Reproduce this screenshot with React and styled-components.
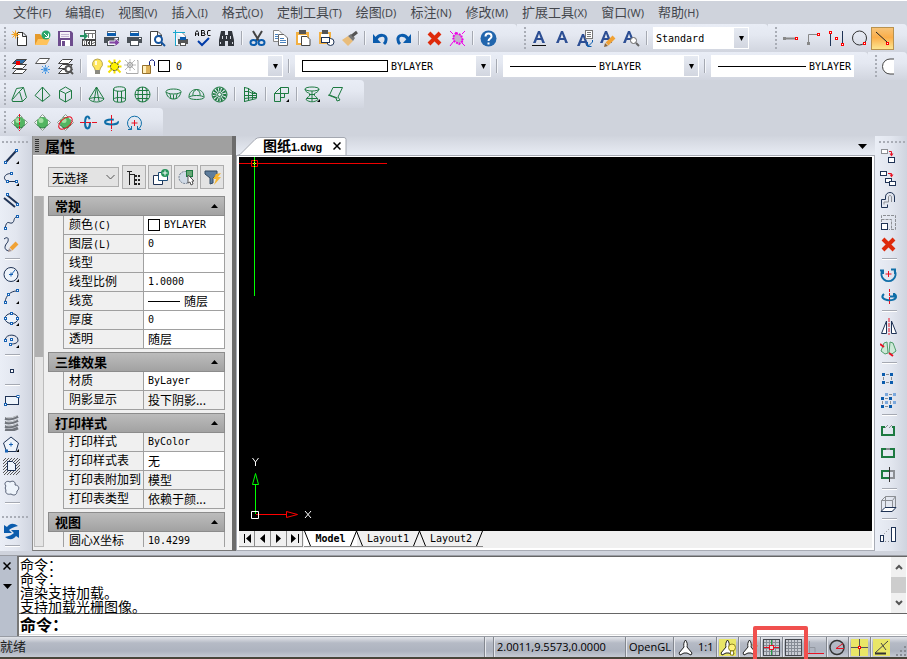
import React from "react";
import styled, { createGlobalStyle, css } from "styled-components";

const navy = "#1f3355";
const blue = "#0b5cad";
const green = "#1d7a41";
const gray = "#8c8f94";
const red = "#e81123";
const cjk = '"Noto Sans CJK SC", sans-serif';
const mono = '"DejaVu Sans Mono", "Noto Sans CJK SC", monospace';

const GlobalStyle = createGlobalStyle`
  * { box-sizing: border-box; }
  body { margin: 0; overflow: hidden; background: #cfd3dc; font-family: ${cjk}; }
  button, select, input { font: inherit; color: inherit; margin: 0; padding: 0; border: 0; background: none; border-radius: 0; outline: 0; }
  select { appearance: none; }
  svg { display: block; flex: none; }
`;

/* ---------- icon drawings, 17 x 17 ---------- */

const Line = ({ d, c = navy, w = 1, f = "none", dash }) => (
  <path d={d} stroke={c} strokeWidth={w} fill={f} strokeDasharray={dash} />
);
const Node = ({ x, y, c = "#1763b5", s = 2 }) => (
  <rect x={x - s / 2} y={y - s / 2} width={s} height={s} fill="#fff" stroke={c} />
);
const Fly = () => <path d="M16 13v3h-3z" fill="#000" />;
const Box = ({ x, y, w, h, c = navy, f = "none", sw = 1 }) => (
  <rect x={x} y={y} width={w} height={h} stroke={c} fill={f} strokeWidth={sw} />
);
const Page = () => (
  <Line d="M1.5 1.5H9l3.500 3.500v10.500h-11zM8.500 1.500v4h4" c="#444" f="#fff" />
);
const LetterA = ({ c = "#2d4f94" }) => (
  <path d="M2 13L7 1h2l5 12h-2.700l-1.100-3H5.800l-1.100 3zM6.500 8h3L8 3.800z" fill={c} fillRule="evenodd" />
);
const Printer = () => (
  <>
    <Box x={4.5} y={1.5} w={8} h={4} c="#6a7078" f="#fff" />
    <path d="M4 3h9v3H4z" fill={blue} />
    <path d="M1 7h15v6H1z" fill="#4b5158" />
    <path d="M13 8h2v1h-2z" fill="#fff" />
    <Box x={4.5} y={10.5} w={8} h={5} c="#4b5158" f="#fff" />
  </>
);
const Orb = () => (
  <>
    <path d="M8.500.5l3 3h-6zM8.500 16.500l3-3h-6zM.5 8.500l3-3v6zM16.500 8.500l-3-3v6z" fill="#eef3f0" stroke="#8c9a90" />
    <circle cx="8.500" cy="8.500" r="5.500" fill="#52b561" />
    <circle cx="7" cy="6.500" r="2.500" fill="#a5e0a4" />
    <path d="M3.500 11c3 4 7 4 10 0" fill="none" stroke="#2f8048" />
  </>
);
const Cross = () => <Line d="M3 3l11 11M14 3L3 14" c="#de2a0b" w={4} />;
const Sheets = ({ top = "#fff" }) => (
  <>
    <Line d="M5.500 11.500h10l-4 4h-10z" c="#444" f="#fff" />
    <Line d="M5.500 6.500h10l-4 4h-10z" c="#444" f="#fff" />
    <Line d="M5.500 1.500h10l-4 4h-10z" c="#444" f={top} />
  </>
);
const Compass = () => (
  <path
    d="M8.500 1C6.500 3.500 6.500 6 7 8L2 14l1 2 4-2h3l4 2 1-2-5-6c.5-2 .5-4.500-1.500-7z"
    fill="#fff"
    stroke="#222"
  />
);
const Burst = ({ x, y, r, c, w = 1 }) => (
  <path
    stroke={c}
    strokeWidth={w}
    d={`M${x - r} ${y}h${2 * r}M${x} ${y - r}v${2 * r}M${x - r + 1} ${y - r + 1}l${2 * r - 2} ${2 * r - 2}M${x + r - 1} ${y - r + 1}l${2 - 2 * r} ${2 * r - 2}`}
  />
);
const GridLines = () => (
  <>
    <rect x="0.500" y="0.500" width="16" height="16" fill="#c9ccd3" stroke="#45484e" />
    <Line d="M3.500 1v15M6.500 1v15M9.500 1v15M12.500 1v15M1 3.500h15M1 6.500h15M1 9.500h15M1 12.500h15" c="#868b94" />
  </>
);

const icons = {
  newFile: (
    <>
      <Line d="M6.500 2.500H12l3.500 3.500v9.500h-9zM11.500 2.500v4h4" c="#333" f="#fff" />
      <Burst x={4.5} y={4.5} r={4} c="#f3a325" />
      <circle cx="4.500" cy="4.500" r="2" fill="#f3a325" />
    </>
  ),
  open: (
    <>
      <path d="M1 4h5l2 2h4v9H1z" fill="#e59a2c" />
      <path d="M1 15l3-6h12l-3 6z" fill="#ffc35c" />
      <circle cx="12" cy="5" r="4.500" fill="#2ba66a" />
      <Line d="M10 3l4 4M14.500 3.500v4H11" c="#fff" />
    </>
  ),
  save: (
    <>
      <path d="M1 1h13l2 2v13H1z" fill="#6d4c8d" />
      <path d="M3 2h10v6H3z" fill="#f5f1f8" />
      <path d="M4 10h9v6H4z" fill="#fff" />
      <path d="M5 11h3v5H5z" fill="#6d4c8d" />
      <Line d="M4 4.500h8M4 6.500h8" c="#c4b5d3" />
    </>
  ),
  acis: (
    <>
      <Box x={4.5} y={0.5} w={11} h={15} c="#555" f="#fff" />
      <Line d="M5 3.500h11M8.500 4v4M12.500 4v4" c="#777" />
      <path d="M2 9h14v7H2z" fill="#444" />
      <path d="M0 5h4V2l4 4-4 4V7H0z" fill="#259162" />
      <Line d="M3.500 15v-4h2v4M3.500 13h2M9 11.500H7.500v3H9M10.500 11v4M15 11.500h-2.500v1.500h2v1.500h-2.500" c="#fff" />
    </>
  ),
  plotTo: (
    <>
      <Printer />
      <path d="M6 11h6V8l5 4.500-5 4.500v-3H6z" fill="#8447a5" stroke="#e6e9f0" />
    </>
  ),
  print: <Printer />,
  preview: (
    <>
      <Page />
      <circle cx="9.500" cy="9.500" r="3.500" fill="#fff" stroke="#16559f" strokeWidth="2" />
      <Line d="M12 12l4 4" c="#16559f" w={2} />
    </>
  ),
  pageSetup: (
    <>
      <Line d="M3.500 2.500H10l3.500 3.500v3M3.500 2.500v13h3" c="#888" f="#fff" />
      <Line d="M1 2.500h12M3.500 0v16" c="#17a7cf" />
      <path d="M6 9h10v5H6z" fill="#555" />
      <path d="M8 7h6v3H8z" fill={blue} />
      <Box x={8.5} y={12.5} w={5} h={3} c="#555" f="#fff" />
    </>
  ),
  spell: (
    <>
      <Line d="M.5 6V2.500L2 .5l1.500 2V6M.5 4h3M6.500 0v6M6.500.5H9l.5 1-.5 1.500H6.500M9 3l1 1v1L9 5.500H6.500M15.500 .5H13L12.500 2v2.500l.5 1h2.500" c="#111" />
      <Line d="M3 11l4 4 7-7" c="#003ca8" w={2} />
    </>
  ),
  find: (
    <>
      <path d="M3 1h4v4h3V1h4l2 9v6h-6v-5H7v5H1v-6z" fill="#30343b" />
      <Line d="M4.500 6v3M12.500 6v3M2.500 12v2M14.500 12v2M8.500 6v3" c="#d5d8e0" />
    </>
  ),
  cut: (
    <>
      <Line d="M4 1l6 10M13 1L7 11" c="#444" w={2} />
      <ellipse cx="4.500" cy="12.500" rx="3" ry="2.500" stroke={blue} strokeWidth="2" fill="none" />
      <ellipse cx="12.500" cy="12.500" rx="3" ry="2.500" stroke={blue} strokeWidth="2" fill="none" />
    </>
  ),
  copy: (
    <>
      <Line d="M1.500 .5H7l3 3v8h-8.500z" c="#888" f="#fff" />
      <Line d="M6.500 4.500H12l3.500 3.500v7.500h-9z" c="#666" f="#fff" />
      <Line d="M3 4.500h3M3 6.500h3M3 8.500h3M8 8.500h4M8 10.500h6M8 12.500h6" c="#4a83bf" />
    </>
  ),
  paste: (
    <>
      <path d="M1 2h13v13H1z" fill="#f2b042" />
      <path d="M4 0h7v4H4z" fill="#555" />
      <path d="M3 5h9v8H3z" fill="#fff" />
      <Line d="M6.500 6.500H12l3 3v6H6.500z" c="#444" f="#fff" />
    </>
  ),
  pasteBlock: (
    <>
      <path d="M1 2h12v12H1z" fill="#f2b042" />
      <path d="M4 0h6v4H4z" fill="#555" />
      <path d="M3 4h8v8H3z" fill="#fff" />
      <circle cx="12.500" cy="12" r="3.500" fill="#fff" stroke={navy} />
      <Box x={3.5} y={7.5} w={8} h={5} c={navy} f="#fff" />
    </>
  ),
  brush: (
    <>
      <path d="M1 10l6-4 5 5-5 5z" fill="#e9bd7b" />
      <path d="M7 6l3-2 4 4-2 3z" fill="#777" />
      <Line d="M11 6l5-4" c="#555" w={3} />
    </>
  ),
  undo: (
    <>
      <Line d="M4 9c3-5 11-5 10 1 0 2-1 3-2 4" c={blue} w={3} />
      <path d="M1 4v9h8z" fill={blue} />
    </>
  ),
  redo: (
    <>
      <Line d="M13 9C10 4 2 4 3 10c0 2 1 3 2 4" c={blue} w={3} />
      <path d="M16 4v9H8z" fill={blue} />
    </>
  ),
  erase: <Cross />,
  purge: (
    <>
      <path d="M7 3l5 2 2 6-4 3-5-3-1-4z" fill="#c4b0cc" stroke="#f000e8" strokeWidth="2" strokeDasharray="2 1" />
      <Line d="M1 1l3 3M16 1l-3 3M1 16l3-4M16 16l-3-3" c="#f000e8" />
    </>
  ),
  help: (
    <>
      <circle cx="8.500" cy="8.500" r="8" fill="#2266ad" />
      <Line d="M5.500 6.500c0-4 6-4 6 0 0 2-3 2-3 4.500" c="#fff" w={2} />
      <path d="M7.500 12.500h2v2h-2z" fill="#fff" />
    </>
  ),
  textUnder: (
    <>
      <LetterA />
      <Line d="M1 15.500h14" c="#111" />
    </>
  ),
  textPlain: <LetterA />,
  textEdit: (
    <>
      <g transform="translate(-2 3)"><LetterA /></g>
      <Box x={8.5} y={0.5} w={7} h={8} c="#777" f="#fff" />
      <Line d="M10 2.500h4M10 4.500h4M10 6.500h4" c="#777" />
      <Line d="M15.500 10v2l-4 4M10.500 12v4.500h4" c={blue} />
    </>
  ),
  textPen: (
    <>
      <g transform="translate(-2 0)"><LetterA /></g>
      <Line d="M7 14l7-7" c="#f0a235" w={4} />
      <path d="M4 17l1-4 3 3z" fill="#8d6535" />
    </>
  ),
  textFind: (
    <>
      <g transform="translate(-2 0)"><LetterA /></g>
      <circle cx="10.500" cy="10.500" r="3" fill="#fff" stroke="#666" />
      <Line d="M13 13l3 3" c="#666" w={2} />
    </>
  ),
  snapEnd: (
    <>
      <Line d="M2 8.500h12" c="#888" w={2} />
      <path d="M1 7h3v3H1z" fill="#888" />
      <Node x={14.5} y={8.5} c="#f00" />
    </>
  ),
  snapFrom: (
    <>
      <Line d="M3.500 14V4.500H13" c="#888" />
      <path d="M2 12h3v3H2z" fill="#888" />
      <Node x={13.5} y={4.5} c="#f00" />
    </>
  ),
  snapMid: (
    <>
      <Line d="M2.500 3v13M14.500 1v15" c={navy} />
      <Node x={2.5} y={2.5} c="#f00" />
      <Node x={8.5} y={8.5} c="#f00" />
      <Node x={14.5} y={14.5} c="#f00" />
    </>
  ),
  snapCen: (
    <>
      <circle cx="8.500" cy="8" r="7" fill="none" stroke="#333" />
      <Node x={13.5} y={13.5} c="#f00" />
    </>
  ),
  snapLine: (
    <>
      <Line d="M2 2l11 10" c="#222" />
      <Node x={13.5} y={13.5} c="#f00" />
    </>
  ),
  layers: (
    <>
      <Sheets top="#2e6da6" />
      <path d="M5 3h4v4H5z" fill="#e00" />
    </>
  ),
  layerFreeze: (
    <>
      <Line d="M5.500.5h10l-4 5h-10z" c="#555" f="#fff" />
      <Burst x={11.5} y={11.5} r={4.500} c="#4c96de" />
      <Box x={9.5} y={9.5} w={4} h={4} c="#8cc0f0" />
    </>
  ),
  layerFind: (
    <>
      <Sheets />
      <circle cx="11.500" cy="11" r="3" fill="#fff" stroke="#555" strokeWidth="2" />
      <Line d="M13 13l3 3" c="#555" w={2} />
    </>
  ),
  bulb: (
    <>
      <path d="M8.500 1a5 5 0 0 1 3 9l-1 3h-4l-1-3a5 5 0 0 1 3-9z" fill="#ffe65c" stroke="#b7a653" />
      <path d="M6 12h5v4H6z" fill="#8b8b82" />
      <path d="M6 3h2v4H6z" fill="#fffbe0" />
    </>
  ),
  sun: (
    <>
      <Burst x={8.5} y={8.5} r={7} c="#f5e100" w={2} />
      <circle cx="8.500" cy="8.500" r="4" fill="#fff200" stroke="#333" strokeDasharray="2 1" />
    </>
  ),
  frozen: (
    <>
      <Burst x={7} y={7} r={6} c="#bbb" />
      <circle cx="7" cy="7" r="2.500" fill="none" stroke="#999" />
      <Line d="M14 2.500h1v13H3.500V14" c="#aaa" />
    </>
  ),
  unlock: (
    <>
      <path d="M2.500 7.500h8v8h-8z" fill="#dfb35c" stroke="#94702c" />
      <path d="M3 8h3v7H3z" fill="#fff0bd" />
      <Line d="M9.500 7V3.500L11 2h2l1.500 1.500V8" c="#1a2784" w={1} />
    </>
  ),
  wedge: <Line d="M5.500 2.500l7-1 3 10-4 4h-10l-.5-2zM12.500 1.500l-4 4-7 8M8.500 5.500l3 10" c={green} />,
  pyramid: <Line d="M8.500 1L16 9.500l-7.500 6L1 9.500zM8.500 1v14" c={green} />,
  cube: <Line d="M2.500 4.500L8.500 1l6 3.500v8l-6 3.500-6-3.500zM2.500 4.500l6 3 6-3M8.500 7.500V16" c={green} />,
  cone: <Line d="M8.500 1L1 13c3 4 12 4 15 0zM8.500 1L6 15M8.500 1L11 15M1 13c3-2 12-2 15 0" c={green} />,
  cylinder: <Line d="M2.500 3c0-3 12-3 12 0v11c0 3-12 3-12 0zM2.500 3c0 3 12 3 12 0M6.500 5v11M10.500 5v11M2.500 13c2-2 10-2 12 0" c={green} />,
  sphere: (
    <>
      <circle cx="8.500" cy="8.500" r="7.500" fill="none" stroke={green} />
      <Line d="M8.500 1v15M1 8.500h15M2.500 4.500h12M2.500 12.500h12M5.500 1.500c-2 4-2 10 0 14M11.500 1.500c2 4 2 10 0 14" c={green} />
    </>
  ),
  dish: (
    <>
      <ellipse cx="8.500" cy="5.500" rx="7.500" ry="2.500" fill="none" stroke={green} />
      <Line d="M1 6c1 4 3 7 7.500 7S15 10 16 6M5 8l1 5M8.500 8.500v4.500M12 8l-1 5" c={green} />
    </>
  ),
  dome: (
    <>
      <ellipse cx="8.500" cy="11.500" rx="7.500" ry="2" fill="none" stroke={green} />
      <Line d="M1 11c0-10 15-10 15 0M8.500 3.500c-3 1-4 4-3.500 6M8.500 3.500c3 1 4 4 3.500 6" c={green} />
    </>
  ),
  torus: (
    <>
      <circle cx="8.500" cy="8.500" r="7.500" fill="none" stroke={green} />
      <circle cx="8.500" cy="8.500" r="5" fill="none" stroke={green} strokeWidth="4" strokeDasharray="1.500 1" />
      <circle cx="8.500" cy="8.500" r="2" fill="#e6e9f0" stroke={green} />
    </>
  ),
  mesh: <Line d="M2.500 1v15M6.500 2v13M10.500 5v9M14.500 7v5M2.500 1.500l4 1 4 3 4 2M2.500 5.500h4l4 2h4M2.500 9.500h12M2.500 12.500l8-1h4M2.500 15.500l4-1 8-2" c={green} />,
  extrude: (
    <>
      <Line d="M7.500 1.500h8v6h-8zM1.500 7.500h6v8h-6zM1.500 7.500l6-6M7.500 11.500h4v-4" c={green} />
      <Fly />
    </>
  ),
  revolve: (
    <>
      <ellipse cx="8" cy="3" rx="7" ry="2" fill="none" stroke={green} />
      <Line d="M1 3c1 5 5 3 5 5.500s-3 2-4 5c3 3 9 3 12 0-1-3-4-3-4-5s4-1 5-5.500M8 5v10M5 8.500h6M3 12.500h10" c={green} />
      <Fly />
    </>
  ),
  ruled: <Line d="M6 1.500h9.500L11 11l2 3-3 1-1-3M6 1.500L2.500 9l8 3M1 9l8 3" c={green} />,
  orbV: (<><Orb /><Line d="M8.500 0v17" c={red} dash="3 1" /></>),
  orb: <Orb />,
  orbR: (
    <>
      <Orb />
      <ellipse cx="8.500" cy="9" rx="8" ry="4.500" transform="rotate(-40 8.500 9)" fill="none" stroke={red} />
    </>
  ),
  rotX: (<><ellipse cx="7.500" cy="8.500" rx="2.500" ry="6" fill="none" stroke="#0f6ea8" strokeWidth="2" strokeDasharray="24 4" /><Line d="M0 8.500h17" c={red} dash="5 1" /></>),
  rotY: (<><ellipse cx="8.500" cy="8" rx="6.500" ry="2.500" fill="none" stroke="#0f6ea8" strokeWidth="2" strokeDasharray="24 4" /><Line d="M8.500 1v16" c={red} dash="4 1" /></>),
  rotZ: (<><Line d="M5.500 15.500A7 7 0 1 1 11.500 15.500M2 15.500h3.500V12M15 15.500h-3.500V12" c="#0f6ea8" /><Line d="M8.500 6v6M5.500 9h6" c={red} /></>),

  line: (<><Line d="M3 14L13 3" w={2} /><Node x={2.5} y={14.5} /><Node x={13.5} y={2.5} /><Fly /></>),
  polyline: (<><Line d="M8 3.500c-7 0-9 6-3 8h8" /><Node x={8.5} y={3.500} /><Node x={4.5} y={11.5} /><Node x={13.5} y={11.5} /><Fly /></>),
  mline: (<><Line d="M4 3l11 9M1 6l11 9" w={2} /><Node x={4.5} y={2.500} /><Node x={14.5} y={12.5} /></>),
  spline: (<><Line d="M2 14c2-9 4-4 7-5s1-6 5-6" /><Node x={2.5} y={14.5} /><Node x={14.5} y={2.500} /></>),
  sketch: (<><Line d="M1 3c5-4 5 2 3 4s-4 7 2 8" /><Line d="M8 13l6-6" c="#f0a235" w={4} /><path d="M5 16l1-4 3 3z" fill="#a99" /></>),
  circle: (<><circle cx="8" cy="8.500" r="7" fill="#eef4fb" stroke={navy} /><Line d="M8 9l4-5M6 8.500h4M8 6.500v4" c="#1763b5" /><Fly /></>),
  arc: (<><Line d="M2 14C3 7 8 3 14 3" /><Node x={2.5} y={14.5} /><Node x={5.5} y={6.5} /><Node x={14.5} y={2.500} /><Fly /></>),
  ellipse: (<><ellipse cx="8.500" cy="8.500" rx="6.500" ry="5" fill="#eef4fb" stroke={navy} /><Node x={8.5} y={3.500} /><Node x={2.5} y={8.500} /><Node x={14.5} y={8.500} /><Node x={8.5} y={13.5} /><Fly /></>),
  earc: (<><Line d="M2 8C3 1 15 2 15 8c0 3-3 4-7 4" /><Node x={2.5} y={8.500} /><Node x={8.5} y={7.500} /><Node x={7.5} y={12.5} /><Fly /></>),
  point: <Box x={7.5} y={7.5} w={3} h={3} f="#fff" />,
  rect: (<><Box x={2.5} y={4.5} w={13} h={8} f="#eef4fb" /><Node x={2.5} y={12.5} /><Node x={15} y={4.5} /></>),
  helix: (
    <>
      <Line d="M2 4.500c4 1 9 0 13-2M2 8.500c4 1 9 0 13-2M2 12.500c4 1 9 0 13-2M2 16c4 1 9 0 13-2" c="#70747b" w={3} />
      <Line d="M3 3.500c4 1 8 0 11-2M3 7.500c4 1 8 0 11-2M3 11.500c4 1 8 0 11-2" c="#cfd2d7" />
    </>
  ),
  polygon: (<><path d="M8 1l7.500 6-2.500 8.500H3.500L.5 7z" fill="#eef4fb" stroke={navy} /><Line d="M6 8.500h4M8 6.500v4" c="#1763b5" /><Node x={3.5} y={15} /><Fly /></>),
  hatch: (<><Line d="M0 3l3-3M0 6l6-6M0 9l9-9M0 12L12 0M0 15L15 0M1 17L17 1M4 17L17 4M7 17L17 7M10 17l7-7M13 17l4-4" c="#555" /><Line d="M4.500 3.500h5l3 3v6h-8z" f="#eef4fb" /></>),
  cloud: <path d="M3 6c-3-3 1-6 4-4 3-2 6 0 5 3 4 0 5 4 2 6 0 4-3 5-6 3-4 1-6-1-5-4-1-1-1-3 0-4z" fill="#eef4fb" stroke="#555f74" />,
  refresh: (
    <>
      <path d="M1 2v8h8L6 7c2-2 5-3 9-4C10-1 6 1 4 4z" fill={blue} />
      <path d="M16 15V7H8l3 3c-2 2-5 3-9 4 5 4 9 2 11-1z" fill={blue} />
    </>
  ),

  copyObj: (<><Box x={1.500} y={1.500} w={6} h={4} c={gray} f="#fff" /><Box x={8.500} y={9.500} w={6} h={5} f="#fff" /><Line d="M9 3.500h2.500V6" c={red} /><path d="M9.500 5.500h4l-2 3z" fill={red} /></>),
  copyMulti: (<><Box x={0.5} y={1.500} w={6} h={4} f="#fff" /><Box x={5.500} y={8.500} w={6} h={4} f="#fff" /><Box x={9.500} y={11.500} w={6} h={4} f="#fff" /><Line d="M8 3.500h3.500V5" c={red} /><path d="M9.500 4.500h4l-2 3z" fill={red} /></>),
  offset: (<><Line d="M1.500 15.500v-8h4V5c0-6 9-6 9 0v5M1.500 15.500h6v-3" /><Line d="M4 12.500V10h4.500V5c0-2 3-2 3 0v5" c={gray} /></>),
  scale: (<><Line d="M1.500 8V1.500h14v14H9M1.500 5.500h10v10" c={gray} dash="3 1" /><Box x={1.500} y={9.500} w={6} h={6} f="#fff" /></>),
  rotate: (<><Line d="M2.500 4.500A7 7 0 1 0 14.500 4.500M0 4.500h3V8M11 3.500h4V8" c="#0f6ea8" w={2} /><Line d="M8.500 5v6M5.500 8h6" c={red} /></>),
  rotate3: (<><Line d="M4 6c-7 6 11 9 12 3 0-2-1-3-3-3M10 8.500h4V5" c="#0f6ea8" w={2} /><Line d="M9.500 1v16" c={red} dash="3 1" /></>),
  mirror: (<><Line d="M6.500 3v12.500h-5zM11.500 3v12.500h5z" f="#fff" /><Line d="M9 0v17" c={red} dash="4 1" /></>),
  mirror3: (<><Line d="M4 3l3-1 1 11-3 1-4-3zM13 3l-3-1-1 11 3 1 4-3z" c="#4f9c6b" f="#cde9d7" /><Line d="M0 4l4 3M9 13l4 3" c={red} w={2} /></>),
  array: (<><path d="M2 3h3v3H2zM10 3h3v3h-3zM2 11h3v3H2zM10 11h3v3h-3z" fill={blue} /><Line d="M6 4.500h3M6 12.500h3M3.500 7v3M11.500 7v3" c={gray} /></>),
  array3: (<><path d="M5 1h3v3H5zM13 1h3v3h-3zM13 9h3v3h-3zM5 9h3v3H5z" fill="#7ba8dc" /><path d="M1 5h3v3H1zM9 5h3v3H9zM1 13h3v3H1zM9 13h3v3H9z" fill={blue} /><Line d="M9 2.500h3M5 6.500h3M2.500 9v3M10.500 9v3M5 14.500h3" c={gray} /></>),
  breakAt: (<><Line d="M5 5H2v8h12V5h-2" c={green} w={2} /><Line d="M5 6l3-3M9 6l3-3" c={gray} /></>),
  breakOne: (<><Box x={2} y={5} w={12} h={8} c={green} sw={2} /><Line d="M6 5h4" c={gray} w={2} /></>),
  trim: (<><Line d="M9 5H2v7h7" c={green} w={2} /><Line d="M10 5h4v7h-4" c={gray} w={2} /><Line d="M9.500 1v15" c="#333" /></>),
  box3: (<><Line d="M1.500 4.500h11v11h-11zM1.500 4.500l4-4h10l-3 4M15.500.5v11l-3 4M5.500.5v11h10" c={gray} /><Line d="M1 15.500h11l4-4H5z" f="#fff" /></>),
  ucs: (<><Box x={0.5} y={9.500} w={3} h={6} f="#fff" /><Box x={11.500} y={1.500} w={4} h={14} f="#fff" /><Line d="M4 8l6-6M5 15.500h6" c={gray} dash="1 2" /></>),

  tree: (<><Line d="M1 2.500h5M3.500 2v14M3.500 5.500H8M8.500 5v10" c="#222" /><Line d="M8 7h3M12 7h2M8 11h3M12 11h2M8 15h3M12 15h2" c="#222" w={2} /></>),
  selectAdd: (<><Line d="M1.500 6.500h9v9h-9z" f="#fff" /><Line d="M6.500 3.500h9v8h-9z" f="#fff" c="#1c4c77" /><circle cx="13" cy="4" r="4" fill="#25945a" /><Line d="M10.500 4h5M13 1.500v5" c="#fff" /></>),
  quickSel: (<><circle cx="7" cy="8.500" r="6" fill="#d0dae6" stroke="#6e7c8e" strokeDasharray="2 1" /><Box x={8.5} y={1.5} w={6} h={6} c={green} f="#67a876" /><path d="M10 6v8l2-1 1 3 2-1-1-3h2z" fill="#fff" stroke="#555" /></>),
  filter: (<><path d="M1 2h12v3L9 9v5l-3 1V9L1 5z" fill="#5e7d9c" stroke="#334a62" /><path d="M12 5l5-1-3 4h3l-7 8 2-6H9z" fill="#f7b62f" /></>),

  scaleA: <Compass />,
  scaleB: (<><path d="M0 0h17v17H0z" fill="#e9e667" /><Compass /><circle cx="13" cy="8.500" r="3.500" fill="#fff27a" stroke="#8e8421" /><path d="M11.500 12h3v4h-3z" fill="#fff" stroke="#8e8421" /></>),
  scaleC: (<><Compass /><Line d="M12 5l4 3" c="#b4854b" w={3} /></>),
  snapGrid: (<><GridLines /><Line d="M8.500 1v5M8.500 11v5" c="#26a045" /><Line d="M1 8.500h5M11 8.500h5" c={red} /><Box x={6.5} y={6.5} w={4} h={4} c={red} f="#ddd" /></>),
  grid: <GridLines />,
  ortho: (<><Line d="M2.500 2v12" c="#9297a0" /><Line d="M3 8.500h5v5" c="#9297a0" /><Line d="M1 14.500h16" c={red} /></>),
  polar: (<><circle cx="8" cy="8.500" r="7" fill="none" stroke="#333" strokeWidth="1.500" /><Line d="M7 9.500h8M7 9.500l7-5" c={red} /></>),
  osnap: (<><path d="M0 0h17v17H0z" fill="#e9e667" /><Line d="M0 8.500h17M8.500 0v17" c="#555" /><Node x={8.5} y={8.5} c="#f00" /></>),
  otrack: (<><path d="M0 0h17v17H0z" fill="#e9e667" /><Line d="M2 14L15 2M8 4l5 7" c="#444" /><Line d="M2 14.500h11" c="#333" w={2} /></>),
};

const Svg = styled.svg`
  width: 17px;
  height: 17px;
`;
const Icon = ({ name }) => (
  <Svg viewBox="0 0 17 17" aria-hidden="true">{icons[name]}</Svg>
);

/* ---------- shell ---------- */

const Shell = styled.div`
  height: 100vh;
  display: flex;
  flex-direction: column;
  overflow: hidden;
  color: #000;
  font-size: 12px;
`;
const MenuBar = styled.nav`
  flex: none;
  height: 24px;
  padding-left: 13px;
  display: flex;
  gap: 14px;
  border-top: 1px solid #fff;
  background: #cfd3dc;
`;
const MenuItem = styled.button`
  font-size: 13px;
  line-height: 21px;
  height: 22px;
  color: #44474d;
  white-space: nowrap;
  small { font-family: "Noto Sans", sans-serif; font-size: 11px; }
`;

const ToolRow = styled.div`
  flex: none;
  display: flex;
  height: 28px;
`;
const ToolGroup = styled.div`
  display: flex;
  align-items: center;
  flex: ${(p) => (p.$grow ? "1 1 0" : "none")};
  padding: 0 ${(p) => p.$end || 0}px 0 ${(p) => p.$start || 0}px;
  border-radius: 0 4px 0 0;
  background: linear-gradient(#e9edf6, #e4e8f1 40%, #d1d5df);
  overflow: hidden;
`;
const Grip = styled.span`
  flex: none;
  ${(p) =>
    p.$flat
      ? css`width: 27px; height: 2px; margin: 5px 0 2px 2px; background: repeating-linear-gradient(90deg, #a9adb6 0 2px, transparent 2px 4px);`
      : css`width: 2px; height: 22px; margin: 0 2px 0 4px; background: repeating-linear-gradient(#a9adb6 0 2px, transparent 2px 4px);`}
`;
const ToolButton = styled.button`
  flex: none;
  width: 23px;
  height: ${(p) => (p.$tall ? 22 : 23)}px;
  padding: ${(p) => (p.$tall ? "3px 3px 2px" : "2px")};
  border: ${(p) => (p.$tall ? 0 : 1)}px solid ${(p) => (p.$active ? "#b9924e" : "transparent")};
  background: ${(p) => (p.$active ? "linear-gradient(#f7c377, #fbae4a 45%, #fde58f)" : "none")};
`;
const Divider = styled.span`
  flex: none;
  ${(p) =>
    p.$flat
      ? css`width: 15px; height: 2px; margin: 3px 0 3px 5px; background: linear-gradient(#a5a9b2 50%, #fff 50%);`
      : css`width: 2px; height: 14px; margin: 0 3px; background: linear-gradient(90deg, #a5a9b2 50%, #f4f6fa 50%);`}
`;

const Field = styled.div`
  flex: none;
  width: ${(p) => p.$width}px;
  height: 22px;
  margin-left: ${(p) => p.$gap || 0}px;
  padding-left: ${(p) => p.$pad || 3}px;
  display: flex;
  align-items: center;
  gap: 3px;
  background: #fff;
  font-family: ${mono};
  font-size: 10px;
`;
const FieldSelect = styled.select`
  flex: 1;
  min-width: 0;
  height: 20px;
  color: #000;
`;
const ArrowBox = styled.span`
  flex: none;
  width: 14px;
  height: 20px;
  margin-right: 1px;
  display: grid;
  place-items: center;
  background: linear-gradient(#e6eaf2, #d2d6e0);
`;
const ColorSwatch = styled.span`
  flex: none;
  width: ${(p) => p.$w}px;
  height: ${(p) => p.$h}px;
  border: 1px solid #000;
`;
const Rule = styled.span`
  flex: none;
  width: ${(p) => p.$w}px;
  height: 1px;
  background: #000;
`;
const LayerMarks = styled.span`
  flex: none;
  display: flex;
  align-items: center;
  gap: 3px;
  margin-right: 3px;
`;
const LayerMark = styled.span`
  width: 14px;
  display: flex;
  justify-content: center;
`;
const Spacer = styled.span`
  width: 2px;
`;

const DownArrow = ({ w = 5 }) => (
  <svg width={w} height="5" viewBox={`0 0 ${w} 5`} aria-hidden="true">
    <path d={`M0 0h${w}L${w / 2} 5z`} />
  </svg>
);

const Tools = ({ items, tall, active }) =>
  items.map((it, i) =>
    it === "|" ? (
      <Divider key={i} $flat={tall} />
    ) : (
      <ToolButton key={i} type="button" $tall={tall} $active={it === active} aria-label={it}>
        <Icon name={it} />
      </ToolButton>
    )
  );

const Combo = ({ label, value, width, gap, pad, lead, noArrow }) => (
  <Field $width={width} $gap={gap} $pad={pad}>
    {lead}
    <FieldSelect aria-label={label} defaultValue={value}>
      <option>{value}</option>
    </FieldSelect>
    {!noArrow && <ArrowBox><DownArrow /></ArrowBox>}
  </Field>
);

/* ---------- work area ---------- */

const Work = styled.main`
  flex: 1;
  min-height: 0;
  display: flex;
  padding-bottom: 4px;
  background: #cfd3dc;
`;
const SideBar = styled.div`
  flex: none;
  width: 32px;
  display: flex;
  flex-direction: column;
  overflow: hidden;
  padding-left: ${(p) => p.$inset || 0}px;
  background: linear-gradient(90deg, #eaeef6, #e2e6ef 50%, #cfd4df);
`;
const SideGap = styled.span`
  flex: none;
  height: 4px;
`;

const Panel = styled.section`
  flex: none;
  width: 204px;
  display: flex;
  flex-direction: column;
  background: #f0f0f0;
  border-right: 4px solid #6c6c6c;
  border-left: 1px solid #8f8f8f;
  border-bottom: 1px solid #777;
`;
const PanelTitle = styled.h2`
  flex: none;
  display: flex;
  align-items: center;
  gap: 6px;
  height: 20px;
  margin: 0;
  padding-left: 2px;
  background: #a0a0a0;
  border-bottom: 1px solid #fff;
  font-size: 15px;
  font-weight: 700;
`;
const PanelGrip = styled.span`
  width: 4px;
  height: 14px;
  background: repeating-linear-gradient(#333 0 1px, transparent 1px 2px);
`;
const PanelTools = styled.div`
  flex: none;
  display: flex;
  align-items: center;
  gap: 2px;
  padding: 9px 0 7px 15px;
`;
const SelectionBox = styled.div`
  width: 71px;
  height: 20px;
  margin-right: 1px;
  padding-left: 3px;
  display: flex;
  align-items: center;
  background: #e3e3e3;
  border: 1px solid #adadad;
  select { flex: 1; min-width: 0; }
  svg { margin-right: 3px; }
`;
const PanelButton = styled.button`
  width: 24px;
  height: 24px;
  padding: 2px;
  display: grid;
  place-items: center;
  background: #e3e3e3;
  border: 1px solid #adadad;
`;
const PanelBody = styled.div`
  flex: 1;
  min-height: 0;
  display: flex;
  gap: 4px;
  margin-bottom: 3px;
  overflow: hidden;
`;
const ScrollTrack = styled.div`
  flex: none;
  width: 10px;
  margin-left: 1px;
  background: #e5e5e5;
  border: 1px solid #bcbcbc;
  border-top: 0;
`;
const ScrollThumb = styled.div`
  height: 46%;
  background: #b0b0b0;
`;
const Groups = styled.div`
  flex: 1;
  display: flex;
  flex-direction: column;
  gap: 3px;
  margin-right: 7px;
`;
const GroupTitle = styled.button`
  width: 100%;
  height: 20px;
  padding: 0 6px;
  display: flex;
  align-items: center;
  justify-content: space-between;
  border: 1px solid #8c8c8c;
  background: linear-gradient(#bcbcbc, #a2a2a2);
  font-size: 13px;
  font-weight: 700;
  line-height: 18px;
`;
const PropTable = styled.table`
  width: calc(100% - 15px);
  margin-left: 15px;
  border-collapse: separate;
  border-spacing: 0;
  table-layout: fixed;
  border-left: 1px solid #a0a0a0;
`;
const PropLabel = styled.th`
  width: 80px;
  height: 19px;
  padding: 0 0 2px 5px;
  border-right: 1px solid #a0a0a0;
  border-bottom: 1px solid #a0a0a0;
  font-size: 12px;
  font-weight: 400;
  line-height: 16px;
  text-align: left;
  white-space: nowrap;
  b { font-family: ${mono}; font-size: 10px; font-weight: 400; line-height: 0; }
`;
const PropCell = styled.td`
  height: 19px;
  padding: 0 0 0 4px;
  border-right: 1px solid #a0a0a0;
  border-bottom: 1px solid #a0a0a0;
  background: ${(p) => (p.$editable ? "#fff" : "#f0f0f0")};
`;
const PropValue = styled.div`
  display: flex;
  align-items: center;
  gap: 4px;
  height: 18px;
`;
const PropInput = styled.input`
  flex: 1;
  min-width: 0;
  width: 100%;
  height: 18px;
  padding-bottom: 1px;
  font-family: ${(p) => (p.$latin ? mono : cjk)};
  font-size: ${(p) => (p.$latin ? 10 : 12)}px;
`;

const groups = [
  ["常规", [
    ["颜色", "BYLAYER", 1, <ColorSwatch $w={12} $h={12} />, "(C)"],
    ["图层", "0", 1, null, "(L)"],
    ["线型", "", 1],
    ["线型比例", "1.0000", 1],
    ["线宽", "随层", 1, <Rule $w={32} />],
    ["厚度", "0", 1],
    ["透明", "随层", 1],
  ]],
  ["三维效果", [["材质", "ByLayer", 1], ["阴影显示", "投下阴影...", 0]]],
  ["打印样式", [
    ["打印样式", "ByColor", 0],
    ["打印样式表", "无", 1],
    ["打印表附加到", "模型", 0],
    ["打印表类型", "依赖于颜...", 0],
  ]],
  ["视图", [["圆心X坐标", "10.4299", 0]]],
];

const Properties = () => (
  <Panel>
    <PanelTitle><PanelGrip />属性</PanelTitle>
    <PanelTools>
      <SelectionBox>
        <select aria-label="选择"><option>无选择</option></select>
        <svg width="9" height="6" viewBox="0 0 9 6"><path d="M.5 1l4 4 4-4" fill="none" stroke="#555" /></svg>
      </SelectionBox>
      {["tree", "selectAdd", "quickSel", "filter"].map((n) => (
        <PanelButton key={n} type="button" aria-label={n}><Icon name={n} /></PanelButton>
      ))}
    </PanelTools>
    <PanelBody>
      <ScrollTrack><ScrollThumb /></ScrollTrack>
      <Groups>
        {groups.map(([title, rows]) => (
          <div key={title}>
            <GroupTitle type="button">
              {title}
              <svg width="7" height="4" viewBox="0 0 7 4"><path d="M0 4h7L3.500 0z" /></svg>
            </GroupTitle>
            <PropTable>
              <tbody>
                {rows.map(([label, value, editable, lead, key]) => (
                  <tr key={label}>
                    <PropLabel scope="row">{label}{key && <b>{key}</b>}</PropLabel>
                    <PropCell $editable={editable}>
                      <PropValue>
                        {lead}
                        <PropInput
                          aria-label={label}
                          defaultValue={value}
                          readOnly={!editable}
                          $latin={/^[\x00-\x7f]*$/.test(value)}
                        />
                      </PropValue>
                    </PropCell>
                  </tr>
                ))}
              </tbody>
            </PropTable>
          </div>
        ))}
      </Groups>
    </PanelBody>
  </Panel>
);

const Document = styled.section`
  flex: 1;
  min-width: 0;
  display: flex;
  flex-direction: column;
  border-bottom: 1px solid #a8acb5;
`;
const TabStrip = styled.div`
  flex: none;
  height: 19px;
  padding-right: 8px;
  display: flex;
  align-items: flex-end;
  justify-content: space-between;
  background: linear-gradient(#d0d4dd, #e8ecf4);
`;
const FileTab = styled.button`
  position: relative;
  height: 18px;
  width: 111px;
  padding: 0 6px 0 27px;
  display: flex;
  align-items: center;
  justify-content: space-between;
  font-size: 14px;
  font-weight: 700;
  line-height: 16px;
  white-space: nowrap;
  b { font-family: "Liberation Sans", sans-serif; font-size: 11px; }
  & > span, & > svg { position: relative; }
`;
const TabShape = styled.svg`
  && { position: absolute; inset: 0; width: 111px; height: 18px; }
`;
const ListButton = styled.button`
  width: 9px;
  height: 18px;
  display: grid;
  place-items: center;
`;
const Frame = styled.div`
  flex: 1;
  min-height: 0;
  display: flex;
  flex-direction: column;
  padding: 1px 2px;
  border: 1px solid #a8acb5;
  border-bottom: 0;
  background: #fff;
`;
const Canvas = styled.div`
  flex: 1;
  min-height: 0;
  display: flex;
  flex-direction: column;
  justify-content: space-between;
  background: #000;
  overflow: hidden;
`;
const SheetBar = styled.div`
  flex: none;
  height: 18px;
  display: flex;
  align-items: flex-start;
  background: #f0f0f0;
  border-bottom: 1px solid #fff;
`;
const NavButton = styled.button`
  width: 16px;
  height: 16px;
  padding-left: 2px;
  background: #f0f0f0;
  border-right: 1px solid #8c8c8c;
  border-bottom: 1px solid #8c8c8c;
`;
const SheetTab = styled.button`
  flex: none;
  width: ${(p) => p.$width}px;
  height: 16px;
  margin-left: ${(p) => (p.$on ? 1 : -1)}px;
  display: flex;
  align-items: center;
  justify-content: space-between;
  background: ${(p) => (p.$on ? "#fff" : "none")};
  font-family: ${mono};
  font-size: 10px;
  font-weight: ${(p) => (p.$on ? 700 : 400)};
  border-bottom: 1px solid #888;
`;
const Slash = ({ back }) => (
  <svg width="8" height="15" viewBox="0 0 8 15"><path d={back ? "M.5 0l6 15" : "M7.500 0l-6 15"} stroke="#000" /></svg>
);

const Drawing = () => (
  <Document>
    <TabStrip>
      <FileTab type="button">
        <TabShape viewBox="0 0 111 18"><path d="M1 18.500L4 17.500 19 2.500q2-2 5-2h84q2 0 2 2v16" fill="#fff" stroke="#a4a8b1" /></TabShape>
        <span>图纸<b>1.dwg</b></span>
        <svg width="8" height="8" viewBox="0 0 8 8"><path d="M.5.5l7 7M7.500.5l-7 7" stroke="#000" strokeWidth="1.500" /></svg>
      </FileTab>
      <ListButton type="button" aria-label="文档列表"><DownArrow w={9} /></ListButton>
    </TabStrip>
    <Frame>
      <Canvas>
        <svg width="150" height="140" viewBox="0 0 150 140" fill="none">
          <path d="M0 6.500h148" stroke="#f00000" />
          <path d="M15.500 0v139" stroke="#0f0" />
          <path d="M12.500 3.500h6v6h-6z" stroke="#f00000" />
          <path d="M15.500 3v7M14 6.500h3" stroke="#ff0" strokeDasharray="1 1" />
        </svg>
        <svg width="90" height="80" viewBox="0 0 90 80" fill="none">
          <path d="M13.500 7l3 4 3-4M16.500 11v4M66 60l6 7M72 60l-6 7" stroke="#fff" />
          <path d="M16.500 63V33.500M13.500 33.500h6l-3-11z" stroke="#0f0" />
          <path d="M17 63.500h30M47.500 60.500v6l11-3z" stroke="red" />
          <path d="M12.500 60.500h7v7h-7z" stroke="#fff" />
        </svg>
      </Canvas>
      <SheetBar>
        {["M3 3v8M10 2v9L5 6.500z", "M8 2v9L3 6.500z", "M3 2v9l5-4.500z", "M2 2v9l5-4.500zM9 3v8"].map((d, i) => (
          <NavButton key={i} type="button" aria-label={["首个", "上一个", "下一个", "最后"][i]}>
            <svg width="12" height="13" viewBox="0 0 12 13"><path d={d} /><path d={i === 0 ? "M3.500 2v9" : i === 3 ? "M9.500 2v9" : "M0 0"} stroke="#000" /></svg>
          </NavButton>
        ))}
        <SheetTab type="button" $on $width={53}><Slash back />Model<Slash /></SheetTab>
        <SheetTab type="button" $width={64}><Slash back />Layout1<Slash /></SheetTab>
        <SheetTab type="button" $width={64}><Slash back />Layout2<Slash /></SheetTab>
      </SheetBar>
    </Frame>
  </Document>
);

/* ---------- command line and status ---------- */

const Command = styled.section`
  flex: none;
  display: flex;
  height: 81px;
  border-top: 1px solid #9a9da4;
  background: #b9c0cd;
`;
const CommandSide = styled.div`
  flex: none;
  width: 17px;
  display: flex;
  flex-direction: column;
  gap: 12px;
  padding: 6px 0 0 3px;
`;
const SideButton = styled.button`
  width: 9px;
  height: 8px;
`;
const CommandMain = styled.div`
  flex: 1;
  min-width: 0;
  background: #fff;
  border-top: 1px solid #666;
  border-left: 2px solid #777;
`;
const History = styled.div`
  display: flex;
  height: 57px;
  border-bottom: 1px solid #666;
`;
const Log = styled.pre`
  flex: 1;
  margin: 0;
  padding: 0 0 0 1px;
  font-family: ${cjk};
  font-size: 14px;
  line-height: 14px;
`;
const LogScroll = styled.div`
  width: 15px;
  margin-right: 1px;
  display: flex;
  flex-direction: column;
  background: #f0f0f0;
  button { height: 22px; display: grid; place-items: center; }
`;
const LogThumb = styled.div`
  height: 17px;
  background: #cdcdcd;
`;
const Prompt = styled.label`
  display: flex;
  height: 21px;
  padding-left: 1px;
  border-bottom: 1px solid #ddd;
  font-size: 16px;
  font-weight: 700;
  line-height: 20px;
  input { flex: 1; font-weight: 400; }
`;
const Status = styled.footer`
  flex: none;
  display: flex;
  align-items: stretch;
  height: 23px;
  border-top: 1px solid #989ca4;
  border-bottom: 2px solid #49453a;
  background: linear-gradient(#e3e5ea, #b5bac5 30%, #adb3bf 70%, #c5cad3);
  font-family: "Open Sans", ${cjk};
  font-size: 11px;
  line-height: 18px;
`;
const Ready = styled.div`
  flex: 1;
  font-family: ${cjk};
  font-size: 13px;
  color: #222;
`;
const Cell = styled.div`
  flex: none;
  width: ${(p) => p.$width}px;
  padding-left: 3px;
  border-left: 1px solid #83878f;
  box-shadow: inset 1px 0 #e6e8ed;
  display: flex;
  align-items: center;
  gap: 4px;
`;
const StatusToggle = styled.button`
  flex: none;
  width: 22px;
  padding-left: 2px;
  border-left: 1px solid #83878f;
  box-shadow: inset 1px 0 #e6e8ed;
`;
const Marked = styled.div`
  position: relative;
  display: flex;
`;
const Marker = styled.span`
  position: absolute;
  inset: -11px -4px -8px -7px;
  border: 4px solid #f0504e;
  border-radius: 2px;
  pointer-events: none;
  z-index: 1;
`;
const Corner = styled.div`
  width: 15px;
  display: flex;
  align-items: flex-end;
  justify-content: flex-end;
`;

const menus = [
  ["文件", "F"], ["编辑", "E"], ["视图", "V"], ["插入", "I"], ["格式", "O"], ["定制工具", "T"],
  ["绘图", "D"], ["标注", "N"], ["修改", "M"], ["扩展工具", "X"], ["窗口", "W"], ["帮助", "H"],
];
const Toggle = ({ name }) => (
  <StatusToggle type="button" aria-label={name}><Icon name={name} /></StatusToggle>
);

export default function App() {
  return (
    <Shell>
      <GlobalStyle />
      <MenuBar>
        {menus.map(([t, k]) => (
          <MenuItem key={t} type="button">{t}<small>({k})</small></MenuItem>
        ))}
      </MenuBar>

      <ToolRow>
        <ToolGroup $end={17}>
          <Grip />
          <Tools items={["newFile", "open", "save", "acis", "plotTo", "print", "preview", "pageSetup", "spell", "find", "|", "cut", "copy", "paste", "pasteBlock", "brush", "|", "undo", "redo", "|", "erase", "purge", "|", "help"]} />
        </ToolGroup>
        <ToolGroup $start={3} $end={19}>
          <Grip />
          <Tools items={["textUnder", "textPlain", "textEdit", "textPen", "textFind", "|"]} />
          <Combo label="文字样式" value="Standard" width={96} gap={2} />
        </ToolGroup>
        <ToolGroup $grow $start={3}>
          <Grip />
          <Tools items={["snapEnd", "snapFrom", "snapMid", "snapCen", "snapLine"]} active="snapLine" />
        </ToolGroup>
      </ToolRow>

      <ToolRow>
        <ToolGroup $end={14}>
          <Grip />
          <Tools items={["layers", "layerFreeze", "layerFind", "|"]} />
          <Combo
            label="图层" value="0" width={196} gap={2}
            lead={
              <LayerMarks>
                {["bulb", "sun", "frozen", "unlock"].map((n) => <LayerMark key={n}><Icon name={n} /></LayerMark>)}
                <ColorSwatch $w={12} $h={12} />
              </LayerMarks>
            }
          />
          <Spacer /><Divider />
          <Combo label="颜色" value="BYLAYER" width={196} gap={2} pad={7} lead={<ColorSwatch $w={86} $h={12} />} />
          <Spacer /><Divider />
          <Combo label="线型" value="BYLAYER" width={196} gap={2} pad={7} lead={<Rule $w={86} />} />
          <Spacer /><Divider />
          <Combo label="线宽" value="BYLAYER" width={143} gap={2} pad={7} lead={<Rule $w={88} />} noArrow />
        </ToolGroup>
        <ToolGroup $grow $start={3}>
          <Grip />
          <svg width="15" height="17" viewBox="0 0 15 17"><path d="M15 1h-4a7 7 0 0 0 0 15h4" fill="#fff" stroke="#444" /></svg>
        </ToolGroup>
      </ToolRow>

      <ToolRow>
        <ToolGroup $end={17}>
          <Grip />
          <Tools items={["wedge", "pyramid", "cube", "|", "cone", "cylinder", "sphere", "|", "dish", "dome", "torus", "|", "mesh", "|", "extrude", "|", "revolve", "ruled"]} />
        </ToolGroup>
      </ToolRow>

      <ToolRow>
        <ToolGroup $end={17}>
          <Grip />
          <Tools items={["orbV", "orb", "orbR", "rotX", "rotY", "rotZ"]} />
        </ToolGroup>
      </ToolRow>

      <Work>
        <SideBar>
          <Grip $flat />
          <Tools tall items={["line", "polyline", "mline", "spline", "sketch", "|", "circle", "arc", "ellipse", "earc", "|", "point", "|", "rect", "helix", "polygon", "hatch", "cloud", "|"]} />
          <SideGap />
          <Grip $flat />
          <Tools tall items={["refresh", "|"]} />
        </SideBar>
        <Properties />
        <Drawing />
        <SideBar $inset={2}>
          <Grip $flat />
          <Tools tall items={["copyObj", "copyMulti", "offset", "scale", "erase", "|", "rotate", "rotate3", "|", "mirror", "mirror3", "|", "array", "array3", "|", "breakAt", "breakOne", "trim", "|", "box3", "|", "ucs"]} />
        </SideBar>
      </Work>

      <Command>
        <CommandSide>
          <SideButton type="button" aria-label="关闭">
            <svg width="8" height="8" viewBox="0 0 8 8"><path d="M.5.5l7 7M7.500.5l-7 7" stroke="#000" strokeWidth="1.500" /></svg>
          </SideButton>
          <SideButton type="button" aria-label="展开"><DownArrow w={9} /></SideButton>
        </CommandSide>
        <CommandMain>
          <History>
            <Log>{"命令：\n命令：\n渲染支持加载。\n支持加载光栅图像。"}</Log>
            <LogScroll>
              <button type="button" aria-label="向上"><svg width="8" height="6" viewBox="0 0 8 6"><path d="M1 5l3-3 3 3" fill="none" stroke="#555" strokeWidth="2" /></svg></button>
              <LogThumb />
              <button type="button" aria-label="向下"><svg width="8" height="6" viewBox="0 0 8 6"><path d="M1 1l3 3 3-3" fill="none" stroke="#555" strokeWidth="2" /></svg></button>
            </LogScroll>
          </History>
          <Prompt>命令：<input type="text" /></Prompt>
        </CommandMain>
      </Command>

      <Status>
        <Ready>就绪</Ready>
        <Cell $width={9} />
        <Cell $width={132}>2.0011,9.5573,0.0000</Cell>
        <Cell $width={48}>OpenGL</Cell>
        <Cell $width={43}><Icon name="scaleA" />1:1</Cell>
        <Toggle name="scaleB" />
        <Toggle name="scaleC" />
        <Marked>
          <Toggle name="snapGrid" />
          <Toggle name="grid" />
          <Marker />
        </Marked>
        <Toggle name="ortho" />
        <Toggle name="polar" />
        <Toggle name="osnap" />
        <Toggle name="otrack" />
        <Corner>
          <svg width="12" height="12" viewBox="0 0 12 12"><path d="M9 1h2v2H9zM5 5h2v2H5zM9 5h2v2H9zM1 9h2v2H1zM5 9h2v2H5zM9 9h2v2H9z" fill="#888c94" /></svg>
        </Corner>
      </Status>
    </Shell>
  );
}
